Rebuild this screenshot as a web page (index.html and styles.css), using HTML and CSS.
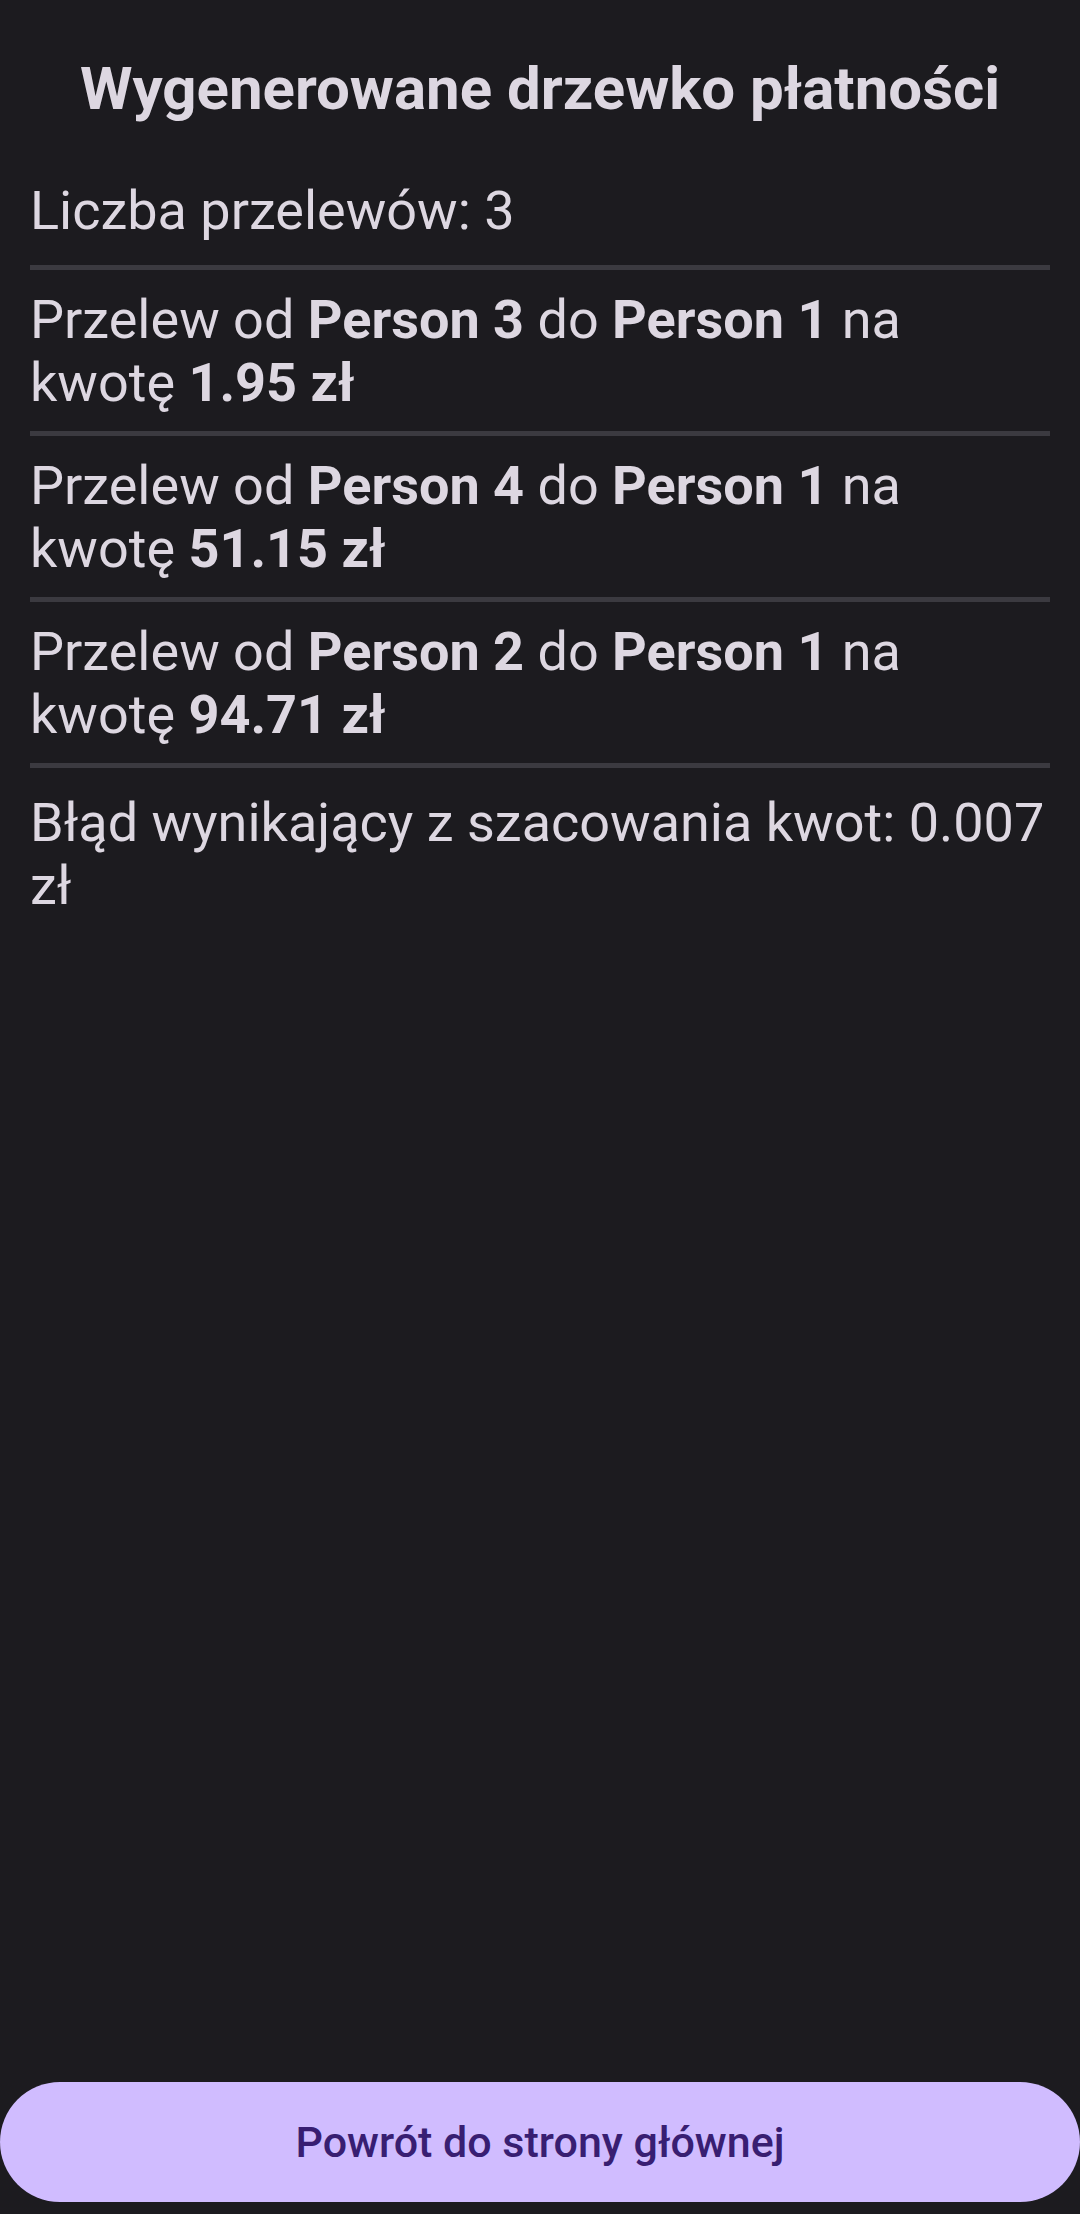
FILE: index.html
```html
<!DOCTYPE html>
<html lang="pl">
<head>
<meta charset="utf-8">
<title>Wygenerowane drzewko płatności</title>
<link rel="stylesheet" href="styles.css">
</head>
<body>
<main class="screen">
  <section class="content">
    <h1 class="title">Wygenerowane drzewko płatności</h1>
    <p class="row row-first">Liczba przelewów: 3</p>
    <div class="divider"></div>
    <p class="row">Przelew od <b>Person 3</b> do <b>Person 1</b> na kwotę <b>1.95 zł</b></p>
    <div class="divider"></div>
    <p class="row">Przelew od <b>Person 4</b> do <b>Person 1</b> na kwotę <b>51.15 zł</b></p>
    <div class="divider"></div>
    <p class="row">Przelew od <b>Person 2</b> do <b>Person 1</b> na kwotę <b>94.71 zł</b></p>
    <div class="divider"></div>
    <p class="row row-last">Błąd wynikający z szacowania kwot: 0.007 zł</p>
  </section>
  <footer class="footer">
    <button class="back-btn" type="button">Powrót do strony głównej</button>
  </footer>
</main>
</body>
</html>
```
FILE: styles.css
```css
html, body {
  margin: 0;
  padding: 0;
  background: #1c1b1f;
}

body {
  font-family: Roboto, "Noto Sans", "Liberation Sans", sans-serif;
  color: #ddd7e1;
}

.screen {
  width: 1080px;
  height: 2214px;
  display: flex;
  flex-direction: column;
  box-sizing: border-box;
}

.content {
  padding: 54px 30px 0;
  display: flex;
  flex-direction: column;
}

.title {
  margin: 0 0 38px;
  font-size: 60px;
  line-height: 69px;
  font-weight: 700;
  text-align: center;
  color: #ddd7e1;
}

.row {
  margin: 0;
  padding: 18px 0 17px;
  font-size: 54px;
  line-height: 63px;
  font-weight: 400;
}

.row b {
  font-weight: 700;
}

.row-first {
  padding-bottom: 23px;
}

.row-last {
  padding-top: 23px;
}

.divider {
  height: 5px;
  background: #3b3a40;
}

.footer {
  margin-top: auto;
  padding-bottom: 12px;
}

.back-btn {
  display: block;
  width: 1080px;
  height: 120px;
  border: none;
  border-radius: 60px;
  background: #d0bcff;
  color: #381e72;
  font-family: Roboto, "Noto Sans", "Liberation Sans", sans-serif;
  font-size: 43px;
  font-weight: 500;
  padding: 0;
}
```
